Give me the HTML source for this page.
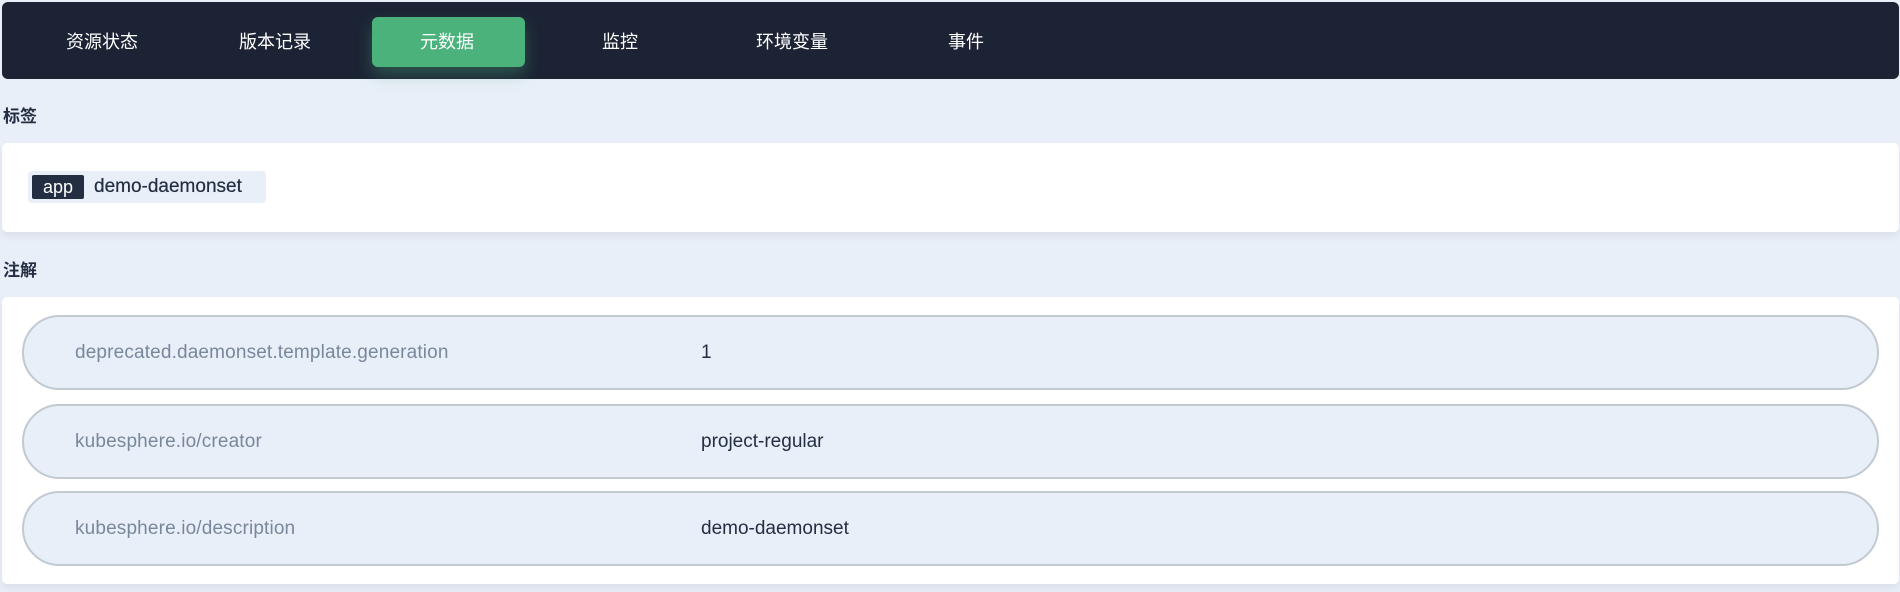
<!DOCTYPE html>
<html><head><meta charset="utf-8"><style>
*{margin:0;padding:0;box-sizing:border-box}
body{width:1900px;height:592px;background:#e9eff8;font-family:"Liberation Sans","Noto Sans CJK SC",sans-serif;position:relative;overflow:hidden}
.nav{position:absolute;left:2px;top:2px;width:1897px;height:77px;background:#1c2334;border-radius:6px}
.tab{position:absolute;top:0;height:77px;line-height:80px;color:#fff;font-size:18px;transform:translateX(-50%);white-space:nowrap}
.active{position:absolute;left:370px;top:15px;width:153px;height:50px;background:#4ab27a;border-radius:6px;box-shadow:0 8px 16px rgba(74,178,122,.35)}
.h{position:absolute;left:3px;font-size:17px;font-weight:bold;color:#242e42}
.card{position:absolute;left:2px;width:1897px;background:#fff;border-radius:5px;box-shadow:0 4px 8px rgba(36,46,66,.08)}
.tag{position:absolute;left:28px;top:171px;width:238px;height:32px;background:#e9eff8;border-radius:4px}
.app{position:absolute;left:32px;top:175px;width:52px;height:24px;background:#242e42;color:#fff;font-size:18px;line-height:24px;text-align:center;border-radius:2px}
.dm{position:absolute;left:94px;top:171px;line-height:32px;font-size:19px;color:#242e42;text-shadow:0 0 .4px #242e42}
.row{position:absolute;left:22px;width:1857px;height:75px;background:#e9eff8;border:2px solid #c1c9d1;border-radius:38px}
.k{position:absolute;left:51px;top:0;line-height:71px;font-size:19px;color:#79879c;letter-spacing:.15px}
.v{position:absolute;left:677px;top:0;line-height:71px;font-size:19px;color:#242e42}
</style></head><body>
<div class="nav">
<div class="active"></div>
<div class="tab" style="left:100px">资源状态</div>
<div class="tab" style="left:273px">版本记录</div>
<div class="tab" style="left:445px">元数据</div>
<div class="tab" style="left:618px">监控</div>
<div class="tab" style="left:790px">环境变量</div>
<div class="tab" style="left:964px">事件</div>
</div>
<div class="h" style="top:102px">标签</div>
<div class="card" style="top:143px;height:89px"></div>
<div class="tag"></div><div class="app">app</div><div class="dm">demo-daemonset</div>
<div class="h" style="top:256px">注解</div>
<div class="card" style="top:297px;height:287px"></div>
<div class="row" style="top:315px"><div class="k">deprecated.daemonset.template.generation</div><div class="v">1</div></div>
<div class="row" style="top:404px"><div class="k">kubesphere.io/creator</div><div class="v">project-regular</div></div>
<div class="row" style="top:491px"><div class="k">kubesphere.io/description</div><div class="v">demo-daemonset</div></div>
</body></html>
